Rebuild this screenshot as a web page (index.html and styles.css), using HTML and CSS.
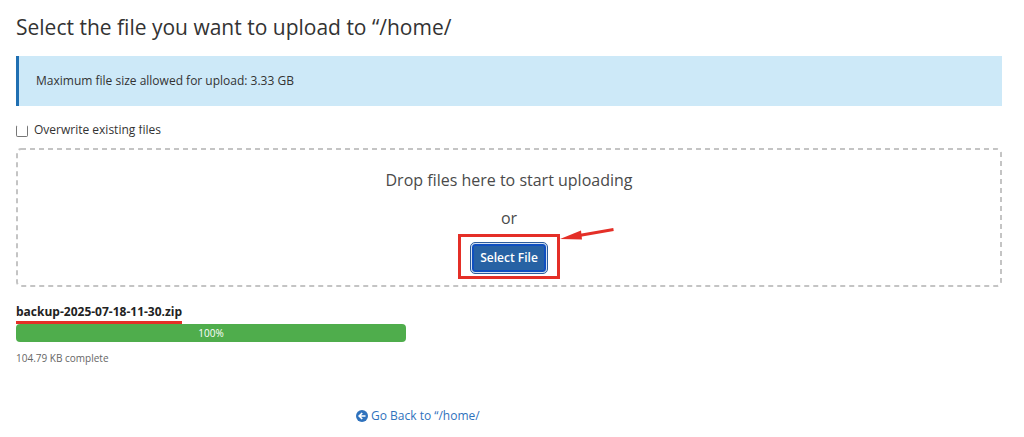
FILE: index.html
```
<!DOCTYPE html>
<html lang="en">

<head>
  <meta charset="UTF-8">
  <meta name="viewport" content="width=device-width, initial-scale=1.0">
  <title>File Upload</title>
  <link rel="stylesheet" href="styles.css">
</head>

<body>
  <main class="upload-page">
    <h1>Select the file you want to upload to “/home/</h1>

    <div class="callout">Maximum file size allowed for upload: 3.33 GB</div>

    <div class="overwrite">
      <input type="checkbox" id="overwrite">
      <label for="overwrite">Overwrite existing files</label>
    </div>

    <div class="dropzone">
      <svg class="dropzone-border" aria-hidden="true">
        <rect x="1" y="1" rx="4" />
      </svg>
      <p>Drop files here to start uploading</p>
      <p>or</p>
      <div class="select-highlight">
        <button type="button" class="btn-select">Select File</button>
        <svg class="arrow" viewBox="0 0 56 14" width="56" height="14" aria-hidden="true">
          <path d="M54.500 2.500 20 8.500" fill="none" stroke="#e42f27" stroke-width="2.8" />
          <path d="M1 12 22 3.500 23 12.500Z" fill="#e42f27" />
        </svg>
      </div>
    </div>

    <section class="upload-item">
      <div class="file-name">backup-2025-07-18-11-30.zip</div>
      <div class="progress">
        <div class="progress-bar" style="width: 100%">100%</div>
      </div>
      <div class="file-status">104.79 KB complete</div>
    </section>

    <a class="go-back" href="#">
      <svg viewBox="0 0 12 12" width="12" height="12" aria-hidden="true">
        <circle cx="6" cy="6" r="6" fill="#2f72bd" />
        <path d="M9.500 6H3.500M6.200 3 3.200 6l3 3" fill="none" stroke="#fff" stroke-width="1.7" />
      </svg>
      <span>Go Back to “/home/</span>
    </a>
  </main>
</body>

</html>
```
FILE: styles.css
```
:root {
  --text-color: #333;
  --link-color: #2f72bd;
  --mark-color: #e42f27;
}
* { box-sizing: border-box; }
body {
  margin: 0;
  background: #fff;
  color: var(--text-color);
  font-family: "Open Sans", "Noto Sans", sans-serif;
  font-size: 12px;
  line-height: 18px;
}
.upload-page {
  padding: 12px 22px 0 16px;
}
h1 {
  margin: 0 0 14px;
  font-size: 21px;
  font-weight: 400;
  line-height: 30px;
}
.callout {
  padding: 16px 17px;
  background: #cde9f8;
  border-left: 3px solid #1f6fb2;
}

/* the row is cut off at its top edge */
.overwrite {
  display: flex;
  align-items: flex-end;
  gap: 6px;
  height: 15px;
  margin: 19px 0 8px;
  overflow: hidden;
}
.overwrite input {
  appearance: none;
  flex: none;
  width: 12px;
  height: 12px;
  margin: 0 0 3px;
  border: 1px solid #777;
  border-top-color: transparent;
  border-radius: 2px;
  background: #fff;
}
.overwrite input:checked { background: var(--link-color); }
.overwrite label { line-height: 20px; }

.dropzone {
  position: relative;
  display: flex;
  flex-direction: column;
  align-items: center;
  padding: 20px 0 8px;
  color: #4a4a4a;
  font-size: 16px;
  line-height: 24px;
}
.dropzone-border {
  position: absolute;
  inset: 0;
  width: 100%;
  height: 100%;
  pointer-events: none;
}
.dropzone-border rect {
  width: calc(100% - 2px);
  height: calc(100% - 2px);
  fill: none;
  stroke: #c4c4c4;
  stroke-width: 2px;
  stroke-dasharray: 5 4;
}
.dropzone p { margin: 0 0 14px; }
.dropzone p + p { margin-bottom: 4px; }
.select-highlight {
  position: relative;
  padding: 6px 10px 3px;
  border: 3px solid var(--mark-color);
}
.btn-select {
  display: block;
  padding: 4px 8px;
  border: 1px solid #d5e2f3;
  border-radius: 4px;
  outline: 1px solid #2b5c9c;
  background: #2762a4;
  box-shadow: inset 0 0 0 2px #0f4fc0;
  color: #fff;
  font: 600 12px/20px "Open Sans", "Noto Sans", sans-serif;
}
.arrow {
  position: absolute;
  left: 100%;
  top: -10px;
  margin-left: 2px;
}

.upload-item {
  width: 40%;
  max-width: 390px;
  margin-top: 16px;
}
.file-name {
  display: inline-block;
  border-bottom: 3px solid var(--mark-color);
  color: #222;
  font-weight: 700;
}
.progress {
  margin: 0 0 7px;
  border-radius: 4px;
  background: #eee;
  overflow: hidden;
}
.progress-bar {
  background: #4fad4c;
  color: #fff;
  font-size: 10px;
  text-align: center;
}
.file-status {
  color: #666;
  font-size: 10px;
}

.go-back {
  display: flex;
  align-items: center;
  justify-content: center;
  gap: 3px;
  width: 81%;
  margin-top: 40px;
  padding-left: 5px;
  color: var(--link-color);
  text-decoration: none;
}
```
